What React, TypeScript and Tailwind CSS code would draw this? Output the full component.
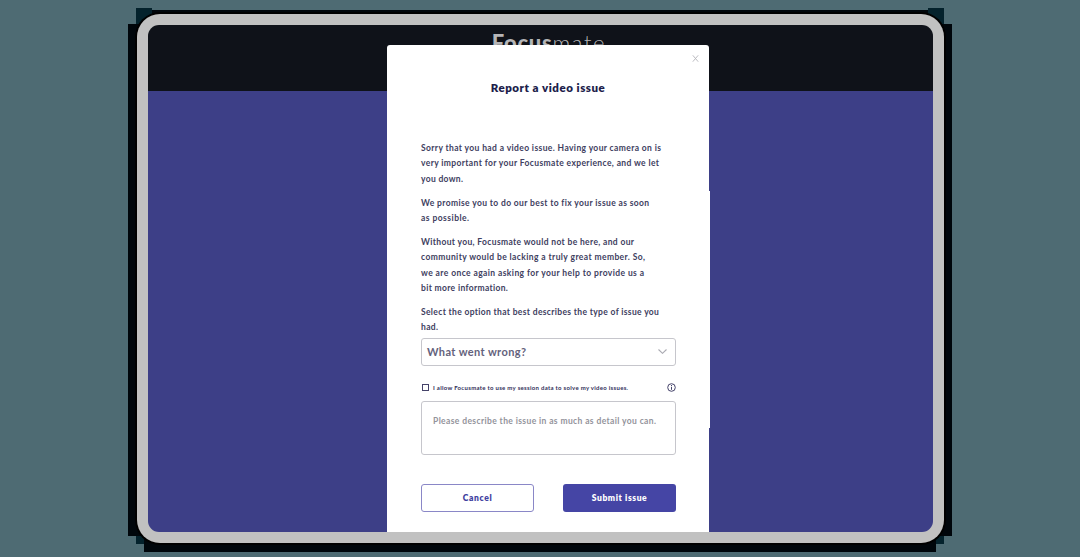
import React from "react";

type Line = { text: string; width: number };

const paragraphs: Line[][] = [
  [
    { text: "Sorry that you had a video issue. Having your camera on is", width: 240 },
    { text: "very important for your Focusmate experience, and we let", width: 238 },
    { text: "you down.", width: 42 },
  ],
  [
    { text: "We promise you to do our best to fix your issue as soon", width: 228 },
    { text: "as possible.", width: 48 },
  ],
  [
    { text: "Without you, Focusmate would not be here, and our", width: 213 },
    { text: "community would be lacking a truly great member. So,", width: 224 },
    { text: "we are once again asking for your help to provide us a", width: 223 },
    { text: "bit more information.", width: 87 },
  ],
  [
    { text: "Select the option that best describes the type of issue you", width: 238 },
    { text: "had.", width: 17 },
  ],
];

/** Text whose tracking is adjusted so that it spans a given width. */
function Fitted({ text, width, className = "" }: Line & { className?: string }) {
  const ref = React.useRef<HTMLSpanElement>(null);
  const [spacing, setSpacing] = React.useState(0);
  React.useLayoutEffect(() => {
    const natural = ref.current!.getBoundingClientRect().width;
    setSpacing((width - natural) / (text.length - 1));
  }, [text, width]);
  return (
    <span ref={ref} className={`whitespace-nowrap ${className}`} style={{ letterSpacing: spacing }}>
      {text}
    </span>
  );
}

function Modal() {
  return (
    <section className="relative mt-5 flex h-[487px] w-[322px] flex-col rounded-t-[3px] bg-white px-[34px] text-[#403e60]">
      <div className="absolute right-[-1px] top-[146px] h-[237px] w-px bg-white" />
      <svg className="absolute right-[10px] top-[10px] h-[7px] w-[7px]" viewBox="0 0 7 7" stroke="#b5b5bb" strokeWidth="0.9">
        <path d="M.8.3l5.4 6.4M6.2.3l-5.4 6.4" />
      </svg>
      <h1 className="mt-[33px] h-5 text-center text-[11.5px] font-extrabold leading-5 text-[#201d4b]">
        <Fitted text="Report a video issue" width={114} />
      </h1>
      <div className="mt-[43px] flex flex-col gap-[8.8px] text-[8.5px] font-bold leading-[15.3px]">
        {paragraphs.map((lines, i) => (
          <p key={i} className="flex flex-col items-start">
            {lines.map((line) => (
              <Fitted key={line.text} {...line} />
            ))}
          </p>
        ))}
      </div>
      <div className="mt-[2.3px] flex h-7 w-[255px] shrink-0 items-center justify-between rounded-[3px] border border-[#c6c6cc] pl-[5px] pr-[8px] text-[11px] font-bold text-[#64627c]">
        <Fitted text="What went wrong?" width={99} className="pt-px" />
        <svg className="h-[5px] w-[9px]" viewBox="0 0 9 5" fill="none" stroke="#aaaab2" strokeWidth="1.1">
          <path d="M.5.5l4 3.8 4-3.8" />
        </svg>
      </div>
      <div className="mt-[17px] flex h-[10px] w-[255px] shrink-0 items-center pl-px">
        <span className="h-[7px] w-[7px] border border-[#45436a]" />
        <Fitted text="I allow Focusmate to use my session data to solve my video issues." width={195} className="ml-1 text-[6px] font-bold leading-[10px] text-[#302e58]" />
        <svg className="ml-auto h-[9px] w-[9px]" viewBox="0 0 9 9" fill="none" stroke="#45436a">
          <circle cx="4.5" cy="4.5" r="3.8" strokeWidth="1" />
          <path d="M4.5 2v1M4.5 3.8v3" strokeWidth="1" />
        </svg>
      </div>
      <div className="mt-2 h-[54px] w-[255px] shrink-0 rounded-[3px] border border-[#c6c6cc] pl-[11px] pt-[12px] text-[8.5px] font-bold leading-[15px] text-[#93939b]">
        <Fitted text="Please describe the issue in as much as detail you can." width={223} />
      </div>
      <div className="mt-[29px] flex w-[255px] justify-between text-[8.5px] font-extrabold">
        <button className="flex h-7 w-[113px] items-center justify-center rounded-[3px] border border-[#8a87c7] text-[#4141a0]">
          <Fitted text="Cancel" width={29} />
        </button>
        <button className="flex h-7 w-[113px] items-center justify-center rounded-[3px] bg-[#4545a5] text-white">
          <Fitted text="Submit issue" width={55} />
        </button>
      </div>
    </section>
  );
}

export default function App() {
  return (
    <main className="h-[557px] w-[1080px] overflow-hidden bg-[#4e6b73] pl-32 pt-2 font-[Lato,sans-serif]">
      <div className="h-[544px] w-[824px] bg-[#00060b] bg-[linear-gradient(#04222c,#04222c),linear-gradient(#04222c,#04222c),linear-gradient(#04222c,#04222c),linear-gradient(#04222c,#04222c)] bg-[length:16px_16px,16px_16px,8px_8px,8px_8px] bg-[position:8px_0,800px_0,8px_528px,808px_528px] bg-no-repeat pl-[9px] pt-[6px] [clip-path:polygon(8px_0,24px_0,24px_2px,800px_2px,800px_0,816px_0,816px_16px,824px_16px,824px_528px,816px_528px,816px_536px,808px_536px,808px_544px,16px_544px,16px_536px,8px_536px,8px_528px,0_528px,0_16px,8px_16px)]">
        <div className="h-[529px] w-[807px] rounded-[23px] bg-[#c1c1c1] p-[11px] shadow-[0_0_0_2px_#000]">
          <div className="grid h-[507px] w-[785px] justify-center overflow-hidden rounded-[11px] bg-[linear-gradient(#0f1219_66px,#3d3f87_66px)]">
            <div className="col-start-1 row-start-1 ml-[17px] flex h-8 justify-center pt-[5px] text-[22px] leading-[26px] text-[#b5b5b7]">
              <Fitted text="Focus" width={60} className="font-black" />
              <Fitted text="mate" width={52} className="font-light" />
            </div>
            <div className="z-10 col-start-1 row-start-1 ml-[15px]">
              <Modal />
            </div>
          </div>
        </div>
      </div>
    </main>
  );
}
